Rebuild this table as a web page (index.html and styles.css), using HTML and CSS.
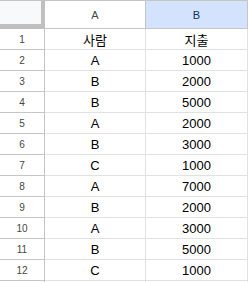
FILE: index.html
```html
<!DOCTYPE html>
<html lang="ko">
<head>
<meta charset="utf-8">
<link rel="stylesheet" href="styles.css">
</head>
<body>
<div class="sheet">
  <div class="corner"></div>
  <div class="colhead">A</div>
  <div class="colhead selected">B</div>

  <div class="rowhead">1</div><div class="cell">사람</div><div class="cell">지출</div>
  <div class="rowhead">2</div><div class="cell">A</div><div class="cell">1000</div>
  <div class="rowhead">3</div><div class="cell">B</div><div class="cell">2000</div>
  <div class="rowhead">4</div><div class="cell">B</div><div class="cell">5000</div>
  <div class="rowhead">5</div><div class="cell">A</div><div class="cell">2000</div>
  <div class="rowhead">6</div><div class="cell">B</div><div class="cell">3000</div>
  <div class="rowhead">7</div><div class="cell">C</div><div class="cell">1000</div>
  <div class="rowhead">8</div><div class="cell">A</div><div class="cell">7000</div>
  <div class="rowhead">9</div><div class="cell">B</div><div class="cell">2000</div>
  <div class="rowhead">10</div><div class="cell">A</div><div class="cell">3000</div>
  <div class="rowhead">11</div><div class="cell">B</div><div class="cell">5000</div>
  <div class="rowhead">12</div><div class="cell">C</div><div class="cell">1000</div>
  <div class="rowhead"></div><div class="cell"></div><div class="cell"></div>
</div>
</body>
</html>
```
FILE: styles.css
```css
html, body {
  margin: 0;
  padding: 0;
  background: #ffffff;
  overflow: hidden;
}
.sheet {
  display: grid;
  grid-template-columns: 45px 101px 102px;
  grid-template-rows: 29px;
  grid-auto-rows: 21px;
  width: 248px;
  height: 282px;
  overflow: hidden;
  font-family: "Liberation Sans", Arial, "Noto Sans CJK KR", sans-serif;
}
.sheet > div {
  box-sizing: border-box;
  display: flex;
  align-items: center;
  justify-content: center;
  white-space: nowrap;
}
.corner {
  background: #f8f9fa;
  border-top: 1px solid #c4c7c5;
  border-right: 4px solid #c0c0c0;
  border-bottom: 5px solid #c0c0c0;
}
.colhead {
  background: #ffffff;
  border-top: 1px solid #c4c7c5;
  border-right: 1px solid #c4c7c5;
  border-bottom: 1px solid #c4c7c5;
  font-size: 11px;
  color: #444746;
  padding-top: 1px;
}
.colhead.selected {
  background: #d3e3fd;
  color: #0b2f6b;
}
.rowhead {
  background: #ffffff;
  border-right: 1px solid #c4c7c5;
  border-bottom: 1px solid #c4c7c5;
  font-size: 10px;
  color: #444746;
}
.cell {
  border-right: 1px solid #e1e1e1;
  border-bottom: 1px solid #e1e1e1;
  font-size: 13px;
  color: #000000;
}
```
